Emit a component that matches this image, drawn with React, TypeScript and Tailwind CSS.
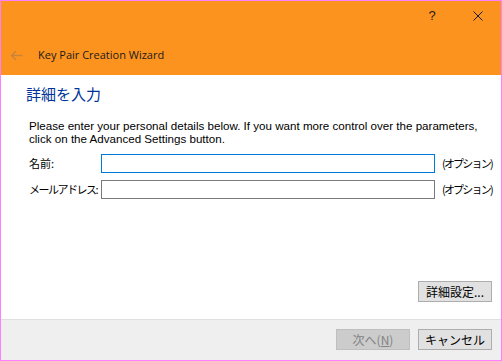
import React from "react";

const jp = { fontFamily: '"Noto Sans CJK JP", "Liberation Sans", sans-serif' } as React.CSSProperties;
const lat = { fontFamily: '"Liberation Sans", "Noto Sans CJK JP", sans-serif' } as React.CSSProperties;

export default function App() {
  return (
    <div className="w-[502px] h-[361px] border border-[#ff80ff] flex flex-col bg-white overflow-hidden" style={jp}>
      {/* Header */}
      <div className="h-[74px] bg-[#fc931f] flex flex-col">
        <div className="h-[30px] flex justify-end">
          <div className="w-[46px] h-[30px] flex items-center justify-center text-[13px] text-[#1a1a1a]" style={lat}>?</div>
          <div className="w-[46px] h-[30px] flex items-center justify-center">
            <svg width="10" height="10" viewBox="0 0 10 10">
              <path d="M0.5 0.5 L9.5 9.5 M9.5 0.5 L0.5 9.5" stroke="#1a1a1a" strokeWidth="1" fill="none" />
            </svg>
          </div>
        </div>
        <div className="flex items-center h-[44px] pt-[5px]">
          <div className="w-[37px] flex items-center justify-center pr-[7px]">
            <svg width="13" height="11" viewBox="0 0 13 11">
              <path d="M12.5 5.5 H1.5 M6 1 L1.5 5.5 L6 10" stroke="#c9833a" strokeWidth="1.3" fill="none" />
            </svg>
          </div>
          <div className="text-[11px] text-[#1a1a1a]" style={{ fontFamily: '"Open Sans", "Liberation Sans", sans-serif' }}>Key Pair Creation Wizard</div>
        </div>
      </div>

      {/* Body */}
      <div className="flex-1 flex flex-col pl-[25px] pr-[9px]">
        <div className="mt-[9px] text-[15px] leading-[20px] text-[#003399]">詳細を入力</div>
        <div className="mt-[15px] pl-[3px] text-[11.6px] leading-[13px] text-black whitespace-nowrap" style={lat}>
          Please enter your personal details below. If you want more control over the parameters,<br />
          click on the Advanced Settings button.
        </div>
        <div className="mt-[9px] pl-[3px] flex items-center h-[19px]">
          <div className="w-[72px] shrink-0 text-[11px] text-black whitespace-nowrap">名前:</div>
          <div className="w-[334px] shrink-0 h-[19px] border border-[#0078d7] bg-white" />
          <div className="ml-[7px] shrink-0 text-[11px] text-black tracking-[-1.8px] whitespace-nowrap">(オプション)</div>
        </div>
        <div className="mt-[7px] pl-[3px] flex items-center h-[19px]">
          <div className="w-[72px] shrink-0 text-[11px] text-black tracking-[-1.5px] whitespace-nowrap">メールアドレス:</div>
          <div className="w-[334px] shrink-0 h-[19px] border border-[#7a7a7a] bg-white" />
          <div className="ml-[7px] shrink-0 text-[11px] text-black tracking-[-1.8px] whitespace-nowrap">(オプション)</div>
        </div>
        <div className="flex-1" />
        <div className="flex justify-end mb-[17px]">
          <div className="w-[74px] h-[21px] border border-[#adadad] bg-[#e1e1e1] flex items-center justify-center text-[12px] text-black">詳細設定...</div>
        </div>
      </div>

      {/* Footer */}
      <div className="h-[41px] bg-[#efefef] border-t border-[#dfdfdf] flex items-center justify-end pr-[9px] gap-[8px] pb-[1px]">
        <div className="w-[74px] h-[21px] border border-[#bfbfbf] bg-[#cccccc] flex items-center justify-center text-[12px] text-[#838383]">次へ(<span className="underline">N</span>)</div>
        <div className="w-[74px] h-[21px] border border-[#adadad] bg-[#e1e1e1] flex items-center justify-center text-[12px] text-black">キャンセル</div>
      </div>
    </div>
  );
}
